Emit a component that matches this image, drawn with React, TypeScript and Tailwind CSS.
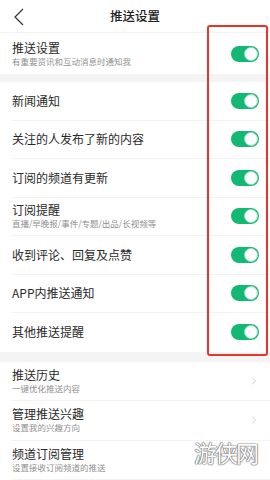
import { ChevronRight } from "lucide-react";

const toggles = [
  { title: "新闻通知" },
  { title: "关注的人发布了新的内容" },
  { title: "订阅的频道有更新" },
  { title: "订阅提醒", sub: "直播/早晚报/事件/专题/出品/长视频等" },
  { title: "收到评论、回复及点赞" },
  { title: "APP内推送通知" },
  { title: "其他推送提醒" },
];

const links = [
  { title: "推送历史", sub: "一键优化推送内容" },
  { title: "管理推送兴趣", sub: "设置我的兴趣方向" },
  { title: "频道订阅管理", sub: "设置接收订阅频道的推送" },
];

function Toggle() {
  return (
    <div className="flex h-[16px] w-[28px] items-center justify-end rounded-full bg-[#13b873] pr-[1px]">
      <div className="h-[14px] w-[14px] rounded-full border border-[#8fe0bd] bg-white" />
    </div>
  );
}

function Label({ title, sub }: { title: string; sub?: string }) {
  return (
    <div className="flex flex-col">
      <span className="text-[12px] leading-[14px] text-[#2a2a2a]">{title}</span>
      {sub && <span className="mt-[1px] text-[8.5px] leading-[11px] text-[#8f8f8f]">{sub}</span>}
    </div>
  );
}

export default function App() {
  return (
    <div
      className="relative h-[480px] w-[270px] overflow-hidden bg-white"
      style={{ fontFamily: '"Noto Sans CJK SC", "Noto Sans", sans-serif' }}
    >
      {/* Header */}
      <div className="relative flex h-[33px] items-center justify-center border-b border-[#f2f2f2]">
        <svg
          width="10"
          height="18"
          viewBox="0 0 10 18"
          className="absolute left-[14px] top-[8px]"
          fill="none"
          stroke="#333"
          strokeWidth="1.2"
        >
          <polyline points="9,1 1,9 9,17" />
        </svg>
        <span className="text-[12.5px] font-medium text-[#222]">推送设置</span>
      </div>

      {/* Master switch */}
      <div className="flex h-[41px] items-center justify-between pl-3 pr-[11px]">
        <Label title="推送设置" sub="有重要资讯和互动消息时通知我" />
        <Toggle />
      </div>

      <div className="h-[8px] bg-[#f4f4f4]" />

      {/* Toggles */}
      <div className="flex flex-col">
        {toggles.map((t, i) => (
          <div key={t.title} className="pl-3">
            <div
              className={
                "flex h-[38.5px] items-center justify-between pr-[11px] " +
                (i < toggles.length - 1 ? "border-b border-[#f3f3f3]" : "")
              }
            >
              <Label title={t.title} sub={t.sub} />
              <Toggle />
            </div>
          </div>
        ))}
      </div>

      <div className="h-[10px] bg-[#f4f4f4]" />

      {/* Links */}
      <div className="flex flex-col">
        {links.map((l) => (
          <div key={l.title} className="pl-3">
            <div className="flex h-[39.5px] items-center justify-between border-b border-[#f3f3f3] pr-[10px]">
              <Label title={l.title} sub={l.sub} />
              <ChevronRight size={12} strokeWidth={1.3} className="text-[#b5b5b5]" />
            </div>
          </div>
        ))}
      </div>

      {/* Red highlight box */}
      <div className="absolute left-[207px] top-[25px] h-[331px] w-[61px] rounded-[3px] border-2 border-[#e8352b]" />

      {/* Watermark */}
      <div
        className="absolute left-[194px] top-[441px] text-[23px] leading-none tracking-[-2px] text-white"
        style={{ textShadow: "0 0 1px #555, 0 0 1px #555, 0 0 2px #888" }}
      >
        游侠网
      </div>
    </div>
  );
}
